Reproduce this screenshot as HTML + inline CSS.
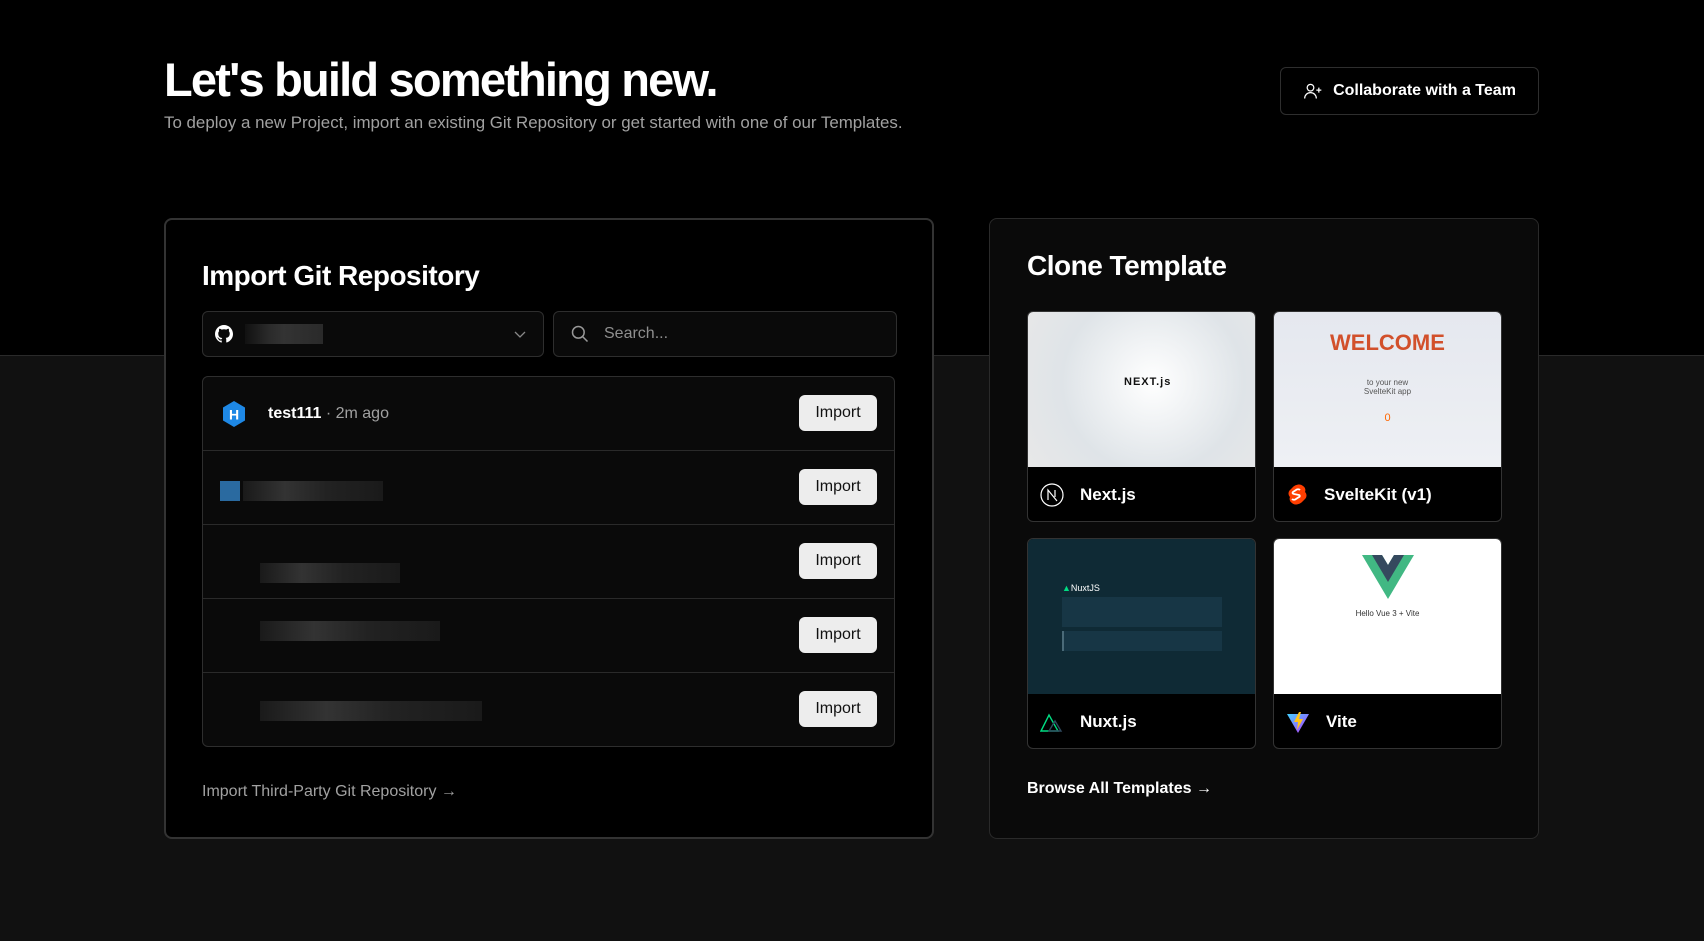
<!DOCTYPE html>
<html><head><meta charset="utf-8"><style>
*{box-sizing:border-box;margin:0;padding:0}
body{width:1704px;height:941px;background:#111;font-family:"Liberation Sans",sans-serif;color:#ededed;position:relative;overflow:hidden}
.top{position:absolute;left:0;top:0;width:1704px;height:356px;background:#000;border-bottom:1px solid #2a2a2a}
.abs{position:absolute}
h1{position:absolute;left:164px;top:52px;font-size:47px;font-weight:700;letter-spacing:-1.8px;color:#fff}
.sub{left:164px;top:113px;font-size:16.9px;color:#a1a1a1}
.collab{left:1280px;top:67px;width:259px;height:48px;border:1px solid #2e2e2e;border-radius:6px;background:#000;display:flex;align-items:center;justify-content:center;gap:10px;font-size:16px;font-weight:700;color:#fff}
.lcard{left:164px;top:218px;width:770px;height:621px;background:#000;border:2px solid #333;border-radius:8px}
.rcard{left:989px;top:218px;width:550px;height:621px;background:#0a0a0a;border:1px solid #2a2a2a;border-radius:8px}
.t2{font-size:28px;font-weight:700;color:#fff;letter-spacing:-0.5px}
.field{height:46px;border:1px solid #2e2e2e;border-radius:6px;background:#0a0a0a;display:flex;align-items:center}
.list{left:202px;top:376px;width:693px;height:371px;border:1px solid #2e2e2e;border-radius:6px;background:#0a0a0a;overflow:hidden}
.row{height:74px;border-bottom:1px solid #2a2a2a;position:relative;display:flex;align-items:center}
.row:last-child{border-bottom:none}
.btn{position:absolute;right:17px;top:18px;width:78px;height:36px;background:#ededed;color:#111;border-radius:6px;font-size:16px;display:flex;align-items:center;justify-content:center}
.blur{position:absolute;height:20px;background:linear-gradient(90deg,#1a1a1a,#333 30%,#222 60%,#1a1a1a)}
.tc{position:absolute;width:229px;height:211px;border:1px solid #333;border-radius:6px;overflow:hidden;background:#000}
.tc .img{height:155px;position:relative}
.tc .lab{height:55px;display:flex;align-items:center;padding-left:12px;gap:16px;font-size:17px;font-weight:700;color:#fff}
</style></head><body>
<div class="top"></div>
<h1>Let's build something new.</h1>
<div class="abs sub">To deploy a new Project, import an existing Git Repository or get started with one of our Templates.</div>
<div class="abs collab"><svg width="20" height="20" viewBox="0 0 24 24" fill="none" stroke="#fff" stroke-width="1.5"><circle cx="9" cy="8" r="4"/><path d="M2 21c0-4 3-7 7-7s7 3 7 7M19 8v6M16 11h6"/></svg>Collaborate with a Team</div>

<div class="abs lcard"></div>
<div class="abs t2" style="left:202px;top:260px">Import Git Repository</div>
<div class="abs field" style="left:202px;top:311px;width:342px;padding-left:12px">
<svg width="18" height="18" viewBox="0 0 16 16" fill="#fff"><path d="M8 0C3.6 0 0 3.6 0 8c0 3.5 2.3 6.5 5.5 7.600.4.1.5-.2.5-.4v-1.4c-2.2.5-2.7-1-2.7-1-.4-.9-.9-1.2-.9-1.2-.7-.5.1-.5.1-.5.8.1 1.2.8 1.2.8.7 1.2 1.900.9 2.300.7.1-.5.3-.9.5-1.1-1.800-.2-3.600-.9-3.600-4 0-.9.3-1.600.8-2.100-.1-.2-.4-1 .1-2.100 0 0 .7-.2 2.200.8.6-.2 1.300-.3 2-.3s1.400.1 2 .3c1.500-1 2.200-.8 2.200-.8.4 1.100.2 1.900.1 2.100.5.6.8 1.300.8 2.100 0 3.100-1.900 3.700-3.600 3.900.3.3.5.8.5 1.500v2.200c0 .2.1.5.6.4C13.700 14.500 16 11.500 16 8c0-4.400-3.600-8-8-8z"/></svg>
<div style="width:78px;height:20px;margin-left:12px;background:linear-gradient(90deg,#111,#2a2a2a 30%,#333 50%,#2a2a2a)"></div>
<svg style="position:absolute;right:16px" width="14" height="14" viewBox="0 0 14 14" fill="none" stroke="#888" stroke-width="1.3"><path d="M2 5l5 5 5-5"/></svg></div>
<div class="abs field" style="left:553px;top:311px;width:344px;padding-left:16px;gap:14px;font-size:16px;color:#8f8f8f">
<svg width="20" height="20" viewBox="0 0 24 24" fill="none" stroke="#999" stroke-width="1.8"><circle cx="10" cy="10" r="7"/><path d="M15 15l6 6"/></svg>Search...</div>

<div class="abs list">
<div class="row"><svg style="margin-left:18px" width="26" height="28" viewBox="0 0 26 28"><path d="M13 1l11 6.5v13L13 27 2 20.5v-13z" fill="#1e88e5"/><text x="13" y="19.5" font-size="14" font-weight="700" fill="#fff" text-anchor="middle" font-family="Liberation Sans">H</text></svg>
<span style="margin-left:21px;font-size:16px;font-weight:700;color:#fff">test111</span><span style="font-size:16px;color:#a1a1a1">&nbsp;· 2m ago</span><div class="btn">Import</div></div>
<div class="row"><div class="blur" style="left:17px;top:30px;width:20px;background:#2a6aa0"></div><div class="blur" style="left:40px;top:30px;width:140px"></div><div class="btn">Import</div></div>
<div class="row"><div class="blur" style="left:57px;top:38px;width:140px"></div><div class="btn">Import</div></div>
<div class="row"><div class="blur" style="left:57px;top:22px;width:180px"></div><div class="btn">Import</div></div>
<div class="row"><div class="blur" style="left:57px;top:28px;width:222px"></div><div class="btn">Import</div></div>
</div>
<div class="abs" style="left:202px;top:783px;font-size:16px;color:#a1a1a1">Import Third-Party Git Repository →</div>

<div class="abs rcard"></div>
<div class="abs t2" style="left:1027px;top:250px">Clone Template</div>

<div class="tc" style="left:1027px;top:311px"><div class="img" style="background:radial-gradient(circle at 55% 45%,#fff,#dfe4e8 60%,#e8e8e8)"><div style="position:absolute;left:96px;top:64px;font-size:11px;font-weight:700;color:#111;letter-spacing:1px">NEXT.js</div></div>
<div class="lab"><svg width="24" height="24" viewBox="0 0 24 24" fill="none" stroke="#fff" stroke-width="1.2"><circle cx="12" cy="12" r="11"/><path d="M8 17V7l9 11M15 7v7"/></svg>Next.js</div></div>

<div class="tc" style="left:1273px;top:311px"><div class="img" style="background:linear-gradient(#e5e8ef,#eef0f4)"><div style="position:absolute;left:0;right:0;top:18px;text-align:center;font-size:22px;font-weight:700;color:#d2502b">WELCOME</div><div style="position:absolute;left:0;right:0;top:66px;text-align:center;font-size:8px;color:#555">to your new<br>SvelteKit app</div><div style="position:absolute;left:0;right:0;top:100px;text-align:center;font-size:11px;color:#f60">0</div></div>
<div class="lab"><svg width="22" height="24" viewBox="0 0 22 24"><path d="M17 3c-3-3-8-1-10 1L4 7c-2 2-2 5 0 7-1 2 0 5 2 6 3 3 8 1 10-1l3-3c2-2 2-5 0-7 1-2 0-5-2-6z" fill="#ff3e00"/><path d="M14 7c-1-1-3-1-4 0l-3 2c-1 1 0 2 1 2l5 1c1 0 1 2 0 2l-3 2c-1 1-3 1-4 0" stroke="#fff" stroke-width="1.8" fill="none"/></svg>SvelteKit (v1)</div></div>

<div class="tc" style="left:1027px;top:538px"><div class="img" style="background:#0f2a35"><div style="position:absolute;left:34px;top:44px;font-size:9px;color:#fff"><span style="color:#00dc82">▲</span>NuxtJS</div><div style="position:absolute;left:34px;top:58px;width:160px;height:30px;background:#173645"></div><div style="position:absolute;left:34px;top:92px;width:160px;height:20px;background:#173645;border-left:2px solid #4a6a78"></div></div>
<div class="lab"><svg width="24" height="20" viewBox="0 0 24 20" fill="none" stroke-width="1.4"><path d="M1 19L9 3l9 16z" stroke="#00dc82"/><path d="M9 19l6-10 6 10z" stroke="#2f495e"/></svg>Nuxt.js</div></div>

<div class="tc" style="left:1273px;top:538px"><div class="img" style="background:#fff"><svg style="position:absolute;left:88px;top:16px" width="52" height="44" viewBox="0 0 52 44"><path d="M0 0h20l6 10 6-10h20L26 44z" fill="#41b883"/><path d="M10 0h10l6 10 6-10h10L26 27z" fill="#35495e"/></svg><div style="position:absolute;left:0;right:0;top:70px;text-align:center;font-size:8px;color:#333">Hello Vue 3 + Vite</div></div>
<div class="lab"><svg width="24" height="24" viewBox="0 0 24 24"><path d="M1 4l11 19L23 4z" fill="url(#vg)"/><defs><linearGradient id="vg" x1="0" y1="0" x2="1" y2="1"><stop offset="0" stop-color="#41d1ff"/><stop offset="1" stop-color="#bd34fe"/></linearGradient></defs><path d="M13 2l-5 10h4l-1 8 6-11h-4l2-7z" fill="#ffc517"/></svg>Vite</div></div>

<div class="abs" style="left:1027px;top:780px;font-size:16px;font-weight:700;color:#fff">Browse All Templates →</div>
</body></html>
